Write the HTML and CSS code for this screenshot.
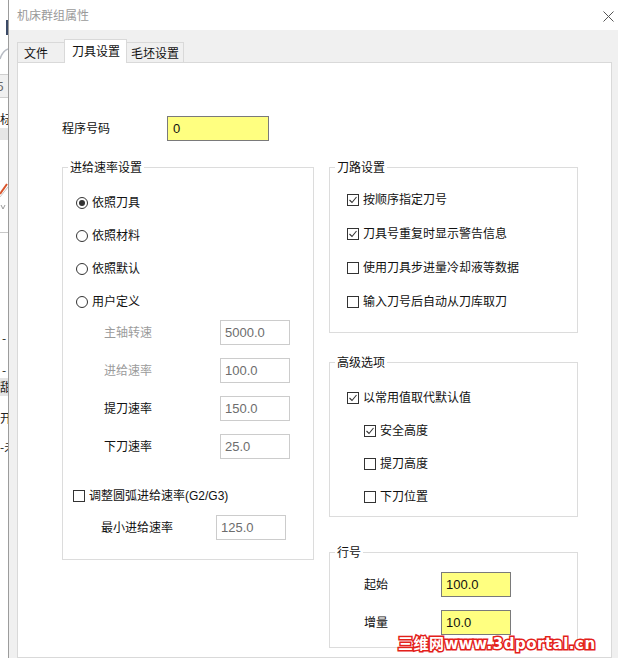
FILE: index.html
```html
<!DOCTYPE html>
<html lang="zh-CN">
<head>
<meta charset="utf-8">
<title>机床群组属性</title>
<link rel="stylesheet" href="styles.css">
</head>
<body>
<div class="screen">
  <aside class="bg-app">
    <div class="bg-head">
      <span class="bg-bar"></span>
      <svg class="bg-curve" width="8" height="14" viewBox="0 0 8 14"><path d="M0 12 C2 6 5 3 8 2" fill="none" stroke="#b8bcc4" stroke-width="1.5"/></svg>
    </div>
    <div class="bg-cell bg-cell-shaded"><span class="bg-text bg-five">5</span></div>
    <div class="bg-cell bg-cell-plain"><span class="bg-text">标</span></div>
    <div class="bg-band"></div>
    <div class="bg-icon">
      <svg width="8" height="40" viewBox="0 0 8 40"><path d="M0 20 L7 10" stroke="#d9542b" stroke-width="2" fill="none"/><path d="M0 23 L8 13" stroke="#c8c8c8" stroke-width="1" fill="none"/><path d="M1 31 L3 35 L5 31" stroke="#9a9a9a" stroke-width="1" fill="none"/></svg>
    </div>
    <div class="bg-sep"></div>
    <ul class="bg-list">
      <li class="bg-item bg-dash">-</li>
      <li class="bg-item bg-dash bg-dash-2">-</li>
      <li class="bg-item bg-hl">甜</li>
      <li class="bg-item bg-open">开</li>
      <li class="bg-item bg-last">-未</li>
    </ul>
  </aside>

  <div class="dialog">
    <header class="titlebar">
      <span class="title">机床群组属性</span>
      <svg class="close" width="11" height="11" viewBox="0 0 11 11"><path d="M0.5 0.5 L10.5 10.5 M10.5 0.5 L0.5 10.5" stroke="#555" stroke-width="1" fill="none"/></svg>
    </header>

    <div class="dialog-body">
      <div class="tabs">
        <div class="tab tab-file">文件</div>
        <div class="tab tab-active">刀具设置</div>
        <div class="tab tab-stock">毛坯设置</div>
      </div>

      <div class="panel">
        <div class="prog-row">
          <span class="label prog-label">程序号码</span>
          <div class="field field-yellow field-prog">0</div>
        </div>

        <div class="columns">
          <fieldset class="group group-feed">
            <legend class="group-legend">进给速率设置</legend>
            <div class="radio-list">
              <div class="opt"><span class="radio on"></span><span class="label">依照刀具</span></div>
              <div class="opt"><span class="radio"></span><span class="label">依照材料</span></div>
              <div class="opt"><span class="radio"></span><span class="label">依照默认</span></div>
              <div class="opt"><span class="radio"></span><span class="label">用户定义</span></div>
            </div>
            <div class="rate-list">
              <div class="rate-row"><span class="label rate-label dim">主轴转速</span><div class="field">5000.0</div></div>
              <div class="rate-row"><span class="label rate-label dim">进给速率</span><div class="field">100.0</div></div>
              <div class="rate-row"><span class="label rate-label">提刀速率</span><div class="field">150.0</div></div>
              <div class="rate-row"><span class="label rate-label">下刀速率</span><div class="field">25.0</div></div>
            </div>
            <div class="opt arc-row"><span class="check"></span><span class="label">调整圆弧进给速率(G2/G3)</span></div>
            <div class="rate-row min-row"><span class="label min-label">最小进给速率</span><div class="field">125.0</div></div>
          </fieldset>

          <div class="right-col">
            <fieldset class="group group-path">
              <legend class="group-legend">刀路设置</legend>
              <div class="check-list">
                <div class="opt"><span class="check"><svg width="10" height="10" viewBox="0 0 10 10"><path d="M1.5 5 L4 7.5 L8.5 2" fill="none" stroke="#333" stroke-width="1.1"/></svg></span><span class="label">按顺序指定刀号</span></div>
                <div class="opt"><span class="check"><svg width="10" height="10" viewBox="0 0 10 10"><path d="M1.5 5 L4 7.5 L8.5 2" fill="none" stroke="#333" stroke-width="1.1"/></svg></span><span class="label">刀具号重复时显示警告信息</span></div>
                <div class="opt"><span class="check"></span><span class="label">使用刀具步进量冷却液等数据</span></div>
                <div class="opt"><span class="check"></span><span class="label">输入刀号后自动从刀库取刀</span></div>
              </div>
            </fieldset>

            <fieldset class="group group-adv">
              <legend class="group-legend">高级选项</legend>
              <div class="adv-list">
                <div class="opt"><span class="check"><svg width="10" height="10" viewBox="0 0 10 10"><path d="M1.5 5 L4 7.5 L8.5 2" fill="none" stroke="#333" stroke-width="1.1"/></svg></span><span class="label">以常用值取代默认值</span></div>
                <div class="opt sub"><span class="check"><svg width="10" height="10" viewBox="0 0 10 10"><path d="M1.5 5 L4 7.5 L8.5 2" fill="none" stroke="#333" stroke-width="1.1"/></svg></span><span class="label">安全高度</span></div>
                <div class="opt sub"><span class="check"></span><span class="label">提刀高度</span></div>
                <div class="opt sub"><span class="check"></span><span class="label">下刀位置</span></div>
              </div>
            </fieldset>

            <fieldset class="group group-line">
              <legend class="group-legend">行号</legend>
              <div class="line-list">
                <div class="rate-row"><span class="label line-label">起始</span><div class="field field-yellow">100.0</div></div>
                <div class="rate-row"><span class="label line-label">增量</span><div class="field field-yellow">10.0</div></div>
              </div>
            </fieldset>
          </div>
        </div>
      </div>
    </div>
  </div>

  <div class="watermark">三维网www.3dportal.cn</div>
</div>
</body>
</html>
```

FILE: styles.css
```css
* { box-sizing: border-box; }
html, body { margin: 0; padding: 0; }
body {
  width: 618px;
  height: 658px;
  overflow: hidden;
  background: #fff;
  font-family: "Liberation Sans", "Noto Sans CJK SC", sans-serif;
  font-size: 12px;
  color: #111;
}
.screen {
  position: relative;
  display: flex;
  width: 618px;
  height: 658px;
  overflow: hidden;
}

/* background application strip */
.bg-app {
  width: 8px;
  flex: none;
  background: #fff;
  overflow: hidden;
  display: flex;
  flex-direction: column;
}
.bg-head {
  height: 74px;
  display: flex;
  flex-direction: column;
  align-items: flex-end;
}
.bg-bar {
  display: block;
  width: 2px;
  height: 15px;
  margin-top: 20px;
  background: #3b4a66;
}
.bg-curve { margin-top: 12px; }
.bg-cell {
  height: 26px;
  overflow: hidden;
  line-height: 24px;
  font-family: "Noto Sans CJK SC", sans-serif;
  font-size: 12px;
  white-space: nowrap;
}
.bg-cell-shaded {
  background: #f0f0f0;
  border-top: 1px solid #cfcfcf;
  border-bottom: 1px solid #cfcfcf;
  color: #666;
  height: 24px;
  line-height: 22px;
}
.bg-five { margin-left: -3px; }
.bg-cell-plain { height: 30px; line-height: 18px; padding-top: 12px; color: #222; }
.bg-text { display: inline-block; }
.bg-band { height: 12px; background: #e6e6e6; }
.bg-icon { height: 40px; margin-top: 34px; }
.bg-sep { height: 1px; margin-top: 18px; background: #c8c8c8; }
.bg-list {
  list-style: none;
  margin: 97px 0 0;
  padding: 0;
  font-family: "Noto Sans CJK SC", sans-serif;
  font-size: 12px;
  line-height: 16px;
  color: #222;
  white-space: nowrap;
}
.bg-item { height: 16px; overflow: hidden; }
.bg-dash { padding-left: 2px; }
.bg-dash-2 { margin-top: 16px; }
.bg-hl { background: #e4e4e4; height: 18px; line-height: 18px; }
.bg-open { margin-top: 14px; }
.bg-last { margin-top: 13px; }

/* dialog */
.dialog {
  flex: 1;
  min-width: 0;
  border-left: 1px solid #9c9c9c;
  background: #f0f0f0;
  display: flex;
  flex-direction: column;
}
.titlebar {
  height: 30px;
  flex: none;
  background: #fff;
  display: flex;
  align-items: center;
  justify-content: space-between;
  padding: 0 4px 0 8px;
}
.title {
  font-family: "Noto Sans CJK SC", sans-serif;
  font-size: 12px;
  line-height: 16px;
  color: #9a9a9a;
}
.close { display: block; margin-top: 2px; }

.dialog-body {
  flex: 1;
  padding: 9px 6px 0 8px;
  display: flex;
  flex-direction: column;
  min-height: 0;
}
.tabs {
  height: 23px;
  display: flex;
  align-items: flex-end;
  flex: none;
}
.tab {
  height: 20px;
  border: 1px solid #d9d9d9;
  border-bottom: none;
  background: #f0f0f0;
  font-family: "Noto Sans CJK SC", sans-serif;
  font-size: 12px;
  line-height: 16px;
  color: #111;
  display: flex;
  align-items: center;
}
.tab-file { width: 47px; padding-left: 6px; border-right: none; }
.tab-active {
  position: relative;
  z-index: 1;
  width: 63px;
  height: 24px;
  margin-bottom: -1px;
  padding-left: 7px;
  padding-bottom: 2px;
  background: #fff;
}
.tab-stock { width: 57px; padding-left: 4px; border-left: none; }

.panel {
  flex: 1;
  background: #fff;
  border: 1px solid #d9d9d9;
  padding: 53px 0 0 44px;
}
.label {
  font-family: "Liberation Sans", "Noto Sans CJK SC", sans-serif;
  font-size: 12px;
  line-height: 16px;
  color: #111;
  white-space: nowrap;
}
.dim { color: #9b9b9b; }
.prog-row { display: flex; align-items: center; height: 25px; }
.prog-label { width: 105px; }
.field {
  width: 70px;
  height: 25px;
  flex: none;
  display: flex;
  align-items: center;
  padding-left: 4px;
  border: 1px solid #cccccc;
  background: #fff;
  color: #6d6d6d;
  font-family: "Liberation Sans", sans-serif;
  font-size: 13px;
}
.field-yellow { background: #ffff80; border-color: #7a7a7a; color: #111; }
.field-prog { width: 102px; padding-left: 5px; }

.columns {
  margin-top: 18px;
  display: flex;
  align-items: flex-start;
  gap: 15px;
}
.group {
  margin: 0;
  padding: 0;
  min-width: 0;
  border: 1px solid #dcdcdc;
}
.group-legend {
  margin-left: 5px;
  padding: 0 2px;
  font-family: "Noto Sans CJK SC", sans-serif;
  font-size: 12px;
  line-height: 16px;
  color: #111;
}
.opt { display: flex; align-items: center; height: 16px; gap: 4px; }
.radio {
  width: 12px;
  height: 12px;
  flex: none;
  border: 1px solid #333;
  border-radius: 50%;
  display: flex;
  align-items: center;
  justify-content: center;
}
.radio.on::after {
  content: "";
  width: 6px;
  height: 6px;
  border-radius: 50%;
  background: #333;
}
.check {
  width: 12px;
  height: 12px;
  flex: none;
  border: 1px solid #333;
  background: #fff;
  display: flex;
  align-items: center;
  justify-content: center;
}
.check svg { display: block; }

/* feed group */
.group-feed { width: 252px; padding-bottom: 19px; }
.radio-list {
  padding: 20px 0 0 13px;
  display: flex;
  flex-direction: column;
  gap: 17px;
}
.rate-list {
  margin-top: 10px;
  padding-left: 41px;
  display: flex;
  flex-direction: column;
  gap: 13px;
}
.rate-row { display: flex; align-items: center; height: 25px; }
.rate-label { width: 116px; }
.arc-row { margin-top: 29px; padding-left: 10px; }
.min-row { margin-top: 11px; padding-left: 38px; }
.min-label { width: 115px; }

/* right column */
.right-col { width: 249px; display: flex; flex-direction: column; }
.group-path { width: 249px; }
.check-list {
  padding: 17px 0 22px 17px;
  display: flex;
  flex-direction: column;
  gap: 18px;
}
.group-adv { width: 249px; margin-top: 21px; }
.adv-list {
  padding: 20px 0 11px 17px;
  display: flex;
  flex-direction: column;
  gap: 17px;
}
.opt.sub { margin-left: 17px; }
.group-line { width: 249px; margin-top: 27px; }
.line-list {
  padding: 12px 0 12px 34px;
  display: flex;
  flex-direction: column;
  gap: 13px;
}
.line-label { width: 77px; }

/* watermark overlay */
.watermark {
  position: absolute;
  left: 398px;
  top: 637px;
  font-family: "DejaVu Sans", "Noto Sans CJK SC", sans-serif;
  font-weight: bold;
  font-size: 15px;
  line-height: 15px;
  letter-spacing: 0.5px;
  color: #fff;
  -webkit-text-stroke: 3px #e3211b;
  paint-order: stroke fill;
  white-space: nowrap;
}
```
